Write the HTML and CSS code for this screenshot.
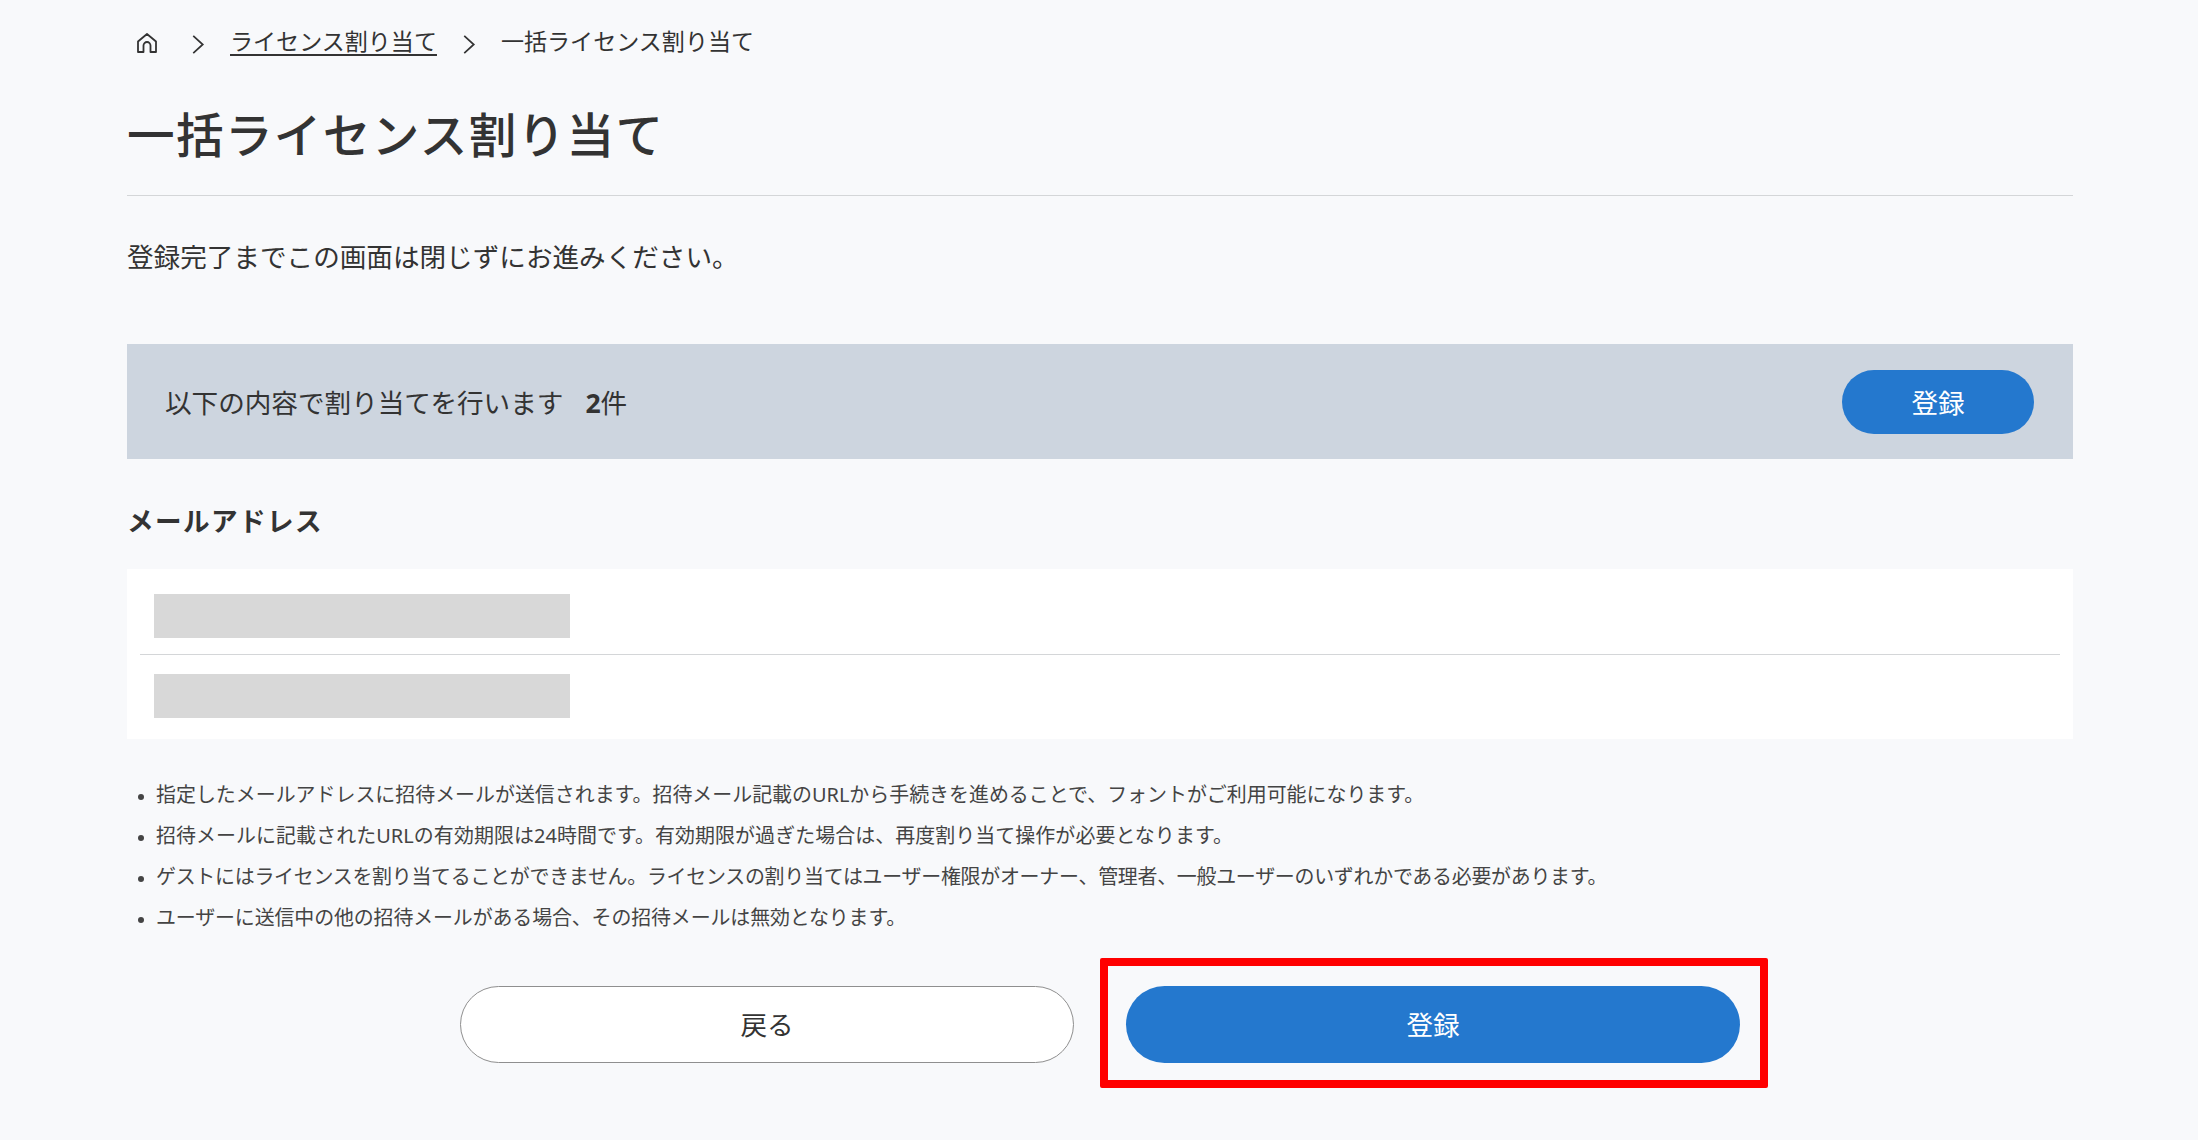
FILE: index.html
```html
<!DOCTYPE html>
<html lang="ja">
<head>
<meta charset="utf-8">
<title>一括ライセンス割り当て</title>
<link rel="stylesheet" href="styles.css">
</head>
<body>
<main class="page">
  <nav class="crumbs">
    <svg class="home" viewBox="0 0 20 20" fill="none" stroke="#333" stroke-width="1.8" stroke-linejoin="round"><path d="M1 8.500 10 1l9 7.500V19h-5.500v-6.500a3.500 3.500 0 0 0-7 0V19H1z"/></svg>
    <svg class="chev" viewBox="0 0 14 20" fill="none" stroke="#333" stroke-width="1.8"><path d="M2 1l10 9-10 9"/></svg>
    <a class="crumb-link" href="#">ライセンス割り当て</a>
    <svg class="chev" viewBox="0 0 14 20" fill="none" stroke="#333" stroke-width="1.8"><path d="M2 1l10 9-10 9"/></svg>
    <span>一括ライセンス割り当て</span>
  </nav>
  <h1 class="title">一括ライセンス割り当て</h1>
  <p class="lead">登録完了までこの画面は閉じずにお進みください。</p>
  <section class="band">
    <p class="band-text">以下の内容で割り当てを行います<b class="count"><span class="num">2</span>件</b></p>
    <button class="btn btn-small">登録</button>
  </section>
  <h2 class="sub">メールアドレス</h2>
  <div class="list">
    <div class="row"><div class="mask"></div></div>
    <div class="row"><div class="mask"></div></div>
  </div>
  <ul class="notes">
    <li>指定したメールアドレスに招待メールが送信されます。招待メール記載のURLから手続きを進めることで、フォントがご利用可能になります。</li>
    <li>招待メールに記載されたURLの有効期限は24時間です。有効期限が過ぎた場合は、再度割り当て操作が必要となります。</li>
    <li>ゲストにはライセンスを割り当てることができません。ライセンスの割り当てはユーザー権限がオーナー、管理者、一般ユーザーのいずれかである必要があります。</li>
    <li>ユーザーに送信中の他の招待メールがある場合、その招待メールは無効となります。</li>
  </ul>
  <div class="actions">
    <button class="btn-wide btn-back">戻る</button>
    <div class="primary-wrap">
      <button class="btn-wide btn-primary">登録</button>
      <div class="highlight"></div>
    </div>
  </div>
</main>
</body>
</html>
```
FILE: styles.css
```css
* { box-sizing: border-box; }
html, body { margin: 0; padding: 0; }
body {
  background: #f8f9fb;
  color: #333;
  font-family: "Noto Sans", "Noto Sans CJK JP", sans-serif;
  height: 1140px;
  overflow: hidden;
}
.page { width: 1946px; margin-left: 127px; }
.crumbs {
  display: flex;
  align-items: center;
  height: 42px;
  margin-top: 19px;
  font-size: 23.05px;
  padding-left: 10px;
}
.home { width: 20px; height: 20px; margin-top: 5px; }
.chev { width: 14px; height: 19px; margin: 8px 25px 0 34px; }
.crumb-link + .chev { margin: 8px 25px 0 25px; }
.crumb-link { color: #333; text-decoration: underline; text-underline-offset: 4px; }
.title {
  margin: 41px 0 0;
  font-size: 47.6px;
  font-weight: 500;
  letter-spacing: 1.35px;
  line-height: 66px;
  height: 94px;
  border-bottom: 1px solid #d4d6d8;
}
.lead {
  margin: 41px 0 0;
  font-size: 26.6px;
  line-height: 40px;
}
.band {
  margin-top: 67px;
  height: 115px;
  background: #cdd5df;
  display: flex;
  align-items: center;
  justify-content: space-between;
  padding: 0 38px;
}
.band-text { margin: 0; font-size: 26.6px; }
.count { margin-left: 22px; font-weight: 400; }
.num { font-weight: 700; }
.btn {
  border: 0;
  font-family: inherit;
  width: 192px;
  height: 64px;
  border-radius: 32px;
  background: #2478ce;
  color: #fff;
  font-size: 26.6px;
  margin-right: 1px;
}
.sub {
  margin: 42px 0 0;
  font-size: 26.6px;
  font-weight: 700;
  line-height: 40px;
  letter-spacing: 1.4px;
}
.list {
  margin-top: 28px;
  height: 170px;
  background: #fff;
  padding: 0 13px;
}
.row {
  height: 86px;
  padding: 25px 14px 0;
}
.row:first-child { border-bottom: 1px solid #d4d6d8; }
.row:last-child { padding-top: 19px; height: 84px; }
.mask { width: 416px; height: 44px; background: #d8d8d8; }
.notes {
  list-style: none;
  margin: 35px 0 0;
  padding: 0 0 0 29px;
  font-size: 19.95px;
  line-height: 41px;
  color: #444;
}
.notes li { position: relative; }
.notes li:nth-child(2) { letter-spacing: 0.08px; }
.notes li:nth-child(3) { letter-spacing: -0.26px; }
.notes li:nth-child(4) { letter-spacing: -0.12px; }
.notes li::before {
  content: "";
  position: absolute;
  left: -18px;
  top: 20px;
  width: 6px;
  height: 6px;
  border-radius: 50%;
  background: #444;
}
.actions {
  display: flex;
  justify-content: center;
  gap: 52px;
  margin-top: 48px;
}
.btn-wide {
  display: block;
  width: 614px;
  height: 77px;
  padding-bottom: 3px;
  border-radius: 39px;
  font-family: inherit;
  font-size: 26.6px;
}
.btn-back { background: #fff; border: 1px solid #8f8f8f; color: #333; }
.btn-primary { background: #2478ce; border: 0; color: #fff; }
.primary-wrap { position: relative; }
.highlight {
  position: absolute;
  top: -28px;
  left: -26px;
  right: -28px;
  bottom: -25px;
  border: 8px solid #ff0000;
  border-radius: 2px;
  pointer-events: none;
}
```
